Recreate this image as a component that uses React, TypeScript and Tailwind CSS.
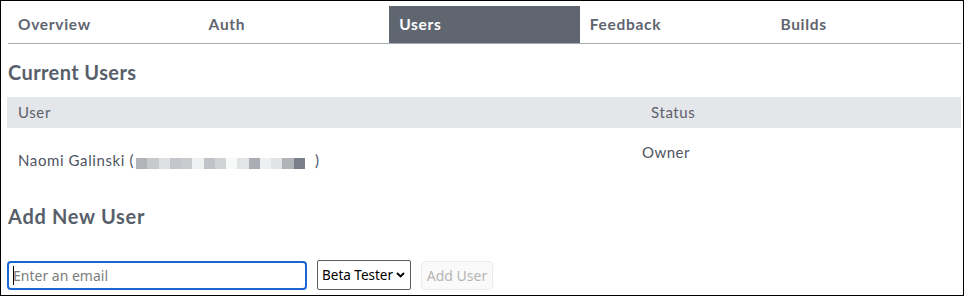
import React from "react";

const tabs = ["Overview", "Auth", "Users", "Feedback", "Builds"];

const blocks = [
  "bg-[#b1b4b9]",
  "bg-[#c7c9cd]",
  "bg-[#dfe0e3]",
  "bg-[#c3c6ca]",
  "bg-[#c9cbcf]",
  "bg-[#eff0f2]",
  "bg-[#c0c3c7]",
  "bg-[#d1d3d6]",
  "bg-[#f8f9f9]",
  "bg-[#e3e4e6]",
  "bg-[#aaadb3]",
  "bg-[#eeeff1]",
  "bg-[#e2e3e5]",
  "bg-[#b0b3b8]",
  "bg-[#7a8089]",
];

export default function App() {
  return (
    <div className="w-[965px] h-[297px] bg-white">
      <div className="w-[964px] h-[296px] border border-black pl-[6px] pr-[2px] font-['Lato',sans-serif] text-[#5b616b]">
        <nav className="mt-[5px] ml-[1px] flex h-[38px] border-b border-[#a8abb0]">
          {tabs.map((t) =>
            t === "Users" ? (
              <div key={t} className="flex-1 flex items-center pl-[10px] text-[15.5px] font-bold tracking-[0.045em] bg-[#5f6670] text-white">
                {t}
              </div>
            ) : (
              <div key={t} className="flex-1 flex items-center pl-[10px] text-[15.5px] font-bold tracking-[0.045em] text-[#5f6570]">
                {t}
              </div>
            )
          )}
        </nav>

        <h2 className="mt-[16px] ml-[1px] text-[20px] leading-[24px] font-bold tracking-[0.02em] text-[#585f6b]">Current Users</h2>

        <div className="mt-[13px] flex h-[31px] items-center bg-[#e4e6ea] text-[15px] tracking-[0.04em]">
          <div className="w-[635px] pl-[11px]">User</div>
          <div className="pl-[9px]">Status</div>
        </div>

        <div className="flex h-[43px] text-[15px] tracking-[0.04em] text-[#4e5562]">
          <div className="w-[635px] pl-[11px] pt-[23px] flex items-start">
            <span className="leading-[18px]">Naomi Galinski (</span>
            <span className="ml-[2px] mt-[7px] flex w-[169px] h-[11px]">
              {blocks.map((b, i) => (
                <span key={i} className={`flex-1 h-[11px] ${b}`} />
              ))}
            </span>
            <span className="ml-[10px] leading-[18px]">)</span>
          </div>
          <div className="pt-[15px] leading-[18px] tracking-[0.03em]">Owner</div>
        </div>

        <h2 className="mt-[33px] ml-[1px] text-[20px] leading-[24px] font-bold tracking-[0.035em] text-[#585f6b]">Add New User</h2>

        <div className="mt-[32px] flex items-center font-['Noto_Sans',sans-serif] text-[14px]">
          <div className="relative w-[300px] h-[29px] rounded-[4px] border-2 border-[#1a66d2] flex items-center pl-[4px]">
            <input
              className="w-full outline-none bg-transparent text-black placeholder:text-[#7d7d7d]"
              placeholder="Enter an email"
            />
            <span className="absolute left-[4px] top-[3px] w-[1px] h-[19px] bg-black" />
          </div>
          <div className="ml-[10px] h-[30px] w-[94px] rounded-[2px] border border-[#5e5e5e] flex items-center pl-[4px] pr-[5px] text-[13.5px] text-black">
            <span>Beta Tester</span>
            <svg className="ml-auto" width="9" height="6" viewBox="0 0 9 6">
              <path d="M1 1 L4.5 4.5 L8 1" fill="none" stroke="black" strokeWidth="1.8" />
            </svg>
          </div>
          <button
            disabled
            className="ml-[10px] h-[29px] w-[72px] rounded-[4px] border border-[#ececec] bg-[#fafafa] text-[#b5b5b5] text-[14px]"
          >
            Add User
          </button>
        </div>
      </div>
    </div>
  );
}
